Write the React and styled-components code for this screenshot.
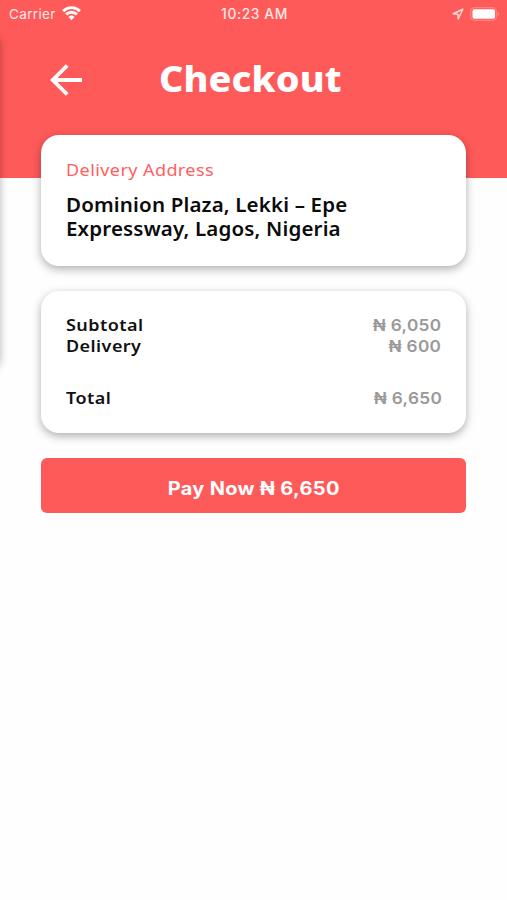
import React from "react";
import styled, { createGlobalStyle } from "styled-components";

const CORAL = "#ff5a5a";

const GlobalStyle = createGlobalStyle`
  * { box-sizing: border-box; }
  body {
    margin: 0;
    background: #fefefe;
    font-family: "Noto Sans", "Open Sans", sans-serif;
  }
`;

const Screen = styled.main`
  position: relative;
  height: 900px;
  overflow: hidden;
  background: linear-gradient(${CORAL} 0 178px, #fefefe 178px);
`;

const PreviousScreenShadow = styled.div`
  position: absolute;
  left: -21px;
  top: 32px;
  width: 20px;
  height: 334px;
  border-radius: 12px;
  box-shadow: 0 3px 10px rgba(0, 0, 0, 0.36);
`;

const StatusBar = styled.header`
  display: grid;
  grid-template-columns: 1fr auto 1fr;
  align-items: center;
  height: 27px;
  padding: 0 7px 0 9px;
  color: #ffe9e7;
  font-family: Inter, sans-serif;
  font-size: 13.5px;
`;

const StatusGroup = styled.div`
  display: flex;
  align-items: center;
  justify-content: ${({ $end }) => ($end ? "flex-end" : "flex-start")};
  gap: 6px;
  letter-spacing: 0.35px;
`;

const Clock = styled.time`
  font-size: 13.8px;
  font-weight: 500;
  letter-spacing: 0.6px;
`;

const TitleBar = styled.div`
  display: grid;
  grid-template-columns: 110px 1fr;
  align-items: center;
  height: 108px;
  padding-left: 49px;
`;

const BackButton = styled.button`
  display: flex;
  width: 34px;
  margin-top: -2px;
  padding: 0;
  border: 0;
  background: none;
`;

const Title = styled.h1`
  margin: -5px 0 0;
  color: #fff;
  font-size: 35px;
  line-height: 48px;
  font-weight: 800;
  letter-spacing: 0.1px;
  white-space: nowrap;
  transform: scaleX(1.08);
  transform-origin: left;
`;

const Content = styled.div`
  display: flex;
  flex-direction: column;
  gap: 25px;
  padding: 0 41px;
`;

const Card = styled.section`
  height: ${({ $height }) => $height}px;
  padding: 23px 25px;
  border-radius: 18px;
  background: #fff;
  box-shadow: 0 3px 10px rgba(0, 0, 0, 0.32);
`;

const AddressLabel = styled.h2`
  margin: 0 0 12px;
  color: #ff6062;
  font-size: 16.7px;
  line-height: 23px;
  font-weight: 400;
  letter-spacing: 0.38px;
  transform: scaleX(1.08);
  transform-origin: left;
`;

const Address = styled.p`
  margin: 0;
  color: #0b0b0b;
  font-size: 19px;
  line-height: 24px;
  font-weight: 600;
  letter-spacing: 0.15px;
  white-space: nowrap;
  transform: scaleX(1.08);
  transform-origin: left;
`;

const PriceRow = styled.div`
  display: flex;
  justify-content: space-between;
  height: 21px;
  margin-top: ${({ $gap }) => $gap || 0}px;
  font-size: 16.5px;
  line-height: 21px;
  font-weight: 600;
`;

const PriceLabel = styled.span`
  color: #111;
  letter-spacing: 0.4px;
  transform: scaleX(1.09);
  transform-origin: left;
`;

const Price = styled.span`
  padding-top: 1px;
  color: #999;
  font-family: Inter, sans-serif;
  font-size: 16.4px;
  letter-spacing: 0.3px;
  margin-right: -0.6px;
  transform: scaleX(1.05);
  transform-origin: right;
`;

const PayButton = styled.button`
  height: 55px;
  padding: 4px 0 0;
  border: 0;
  border-radius: 6px;
  background: ${CORAL};
  color: #fff;
  font: 700 18.5px/24px Inter, sans-serif;
`;

const PayLabel = styled.span`
  display: inline-block;
  letter-spacing: 0.3px;
  transform: scaleX(1.08);
`;

const BackArrow = () => (
  <svg width="34" height="34" viewBox="0 0 34 34" fill="none" stroke="#fff" strokeWidth="3.9">
    <path d="M18.2 2.5 3.8 17l14.4 14.5M4 17h29" />
  </svg>
);

const Wifi = () => (
  <svg width="19" height="15" viewBox="0 0 19 15" fill="none" stroke="#fff" strokeWidth="2.9">
    <path d="M1.1 5.1a12 12 0 0 1 16.8 0M4.1 8.4a7.7 7.7 0 0 1 10.8 0" />
    <path d="M6.5 11a4.3 4.3 0 0 1 6 0l-3 3.3Z" fill="#fff" stroke="none" />
  </svg>
);

const Location = () => (
  <svg width="12" height="12" viewBox="0 0 12 12" fill="none" stroke="#ffd9d6" strokeWidth="1.5" strokeLinejoin="round">
    <path d="M10.8 1.2 1.2 5.8l4.7.5.3 4.7Z" />
  </svg>
);

const Battery = () => (
  <svg width="30" height="14" viewBox="0 0 30 14">
    <rect x="0.7" y="0.7" width="25.6" height="12.6" rx="3.8" fill="none" stroke="#ff8380" strokeWidth="1.2" />
    <rect x="2.5" y="2.3" width="22.5" height="9.4" rx="1.8" fill="#fff" />
    <path d="M27.7 5v4c1.5-.5 1.5-3.5 0-4Z" fill="#ff9490" />
  </svg>
);

export default function App() {
  return (
    <>
      <GlobalStyle />
      <Screen>
        <StatusBar>
          <StatusGroup>Carrier<Wifi /></StatusGroup>
          <Clock>10:23 AM</Clock>
          <StatusGroup $end><Location /><Battery /></StatusGroup>
        </StatusBar>
        <TitleBar>
          <BackButton aria-label="Back"><BackArrow /></BackButton>
          <Title>Checkout</Title>
        </TitleBar>
        <Content>
          <Card $height={131}>
            <AddressLabel>Delivery Address</AddressLabel>
            <Address>Dominion Plaza, Lekki – Epe</Address>
            <Address>Expressway, Lagos, Nigeria</Address>
          </Card>
          <Card $height={142}>
            <PriceRow><PriceLabel>Subtotal</PriceLabel><Price>₦ 6,050</Price></PriceRow>
            <PriceRow><PriceLabel>Delivery</PriceLabel><Price>₦ 600</Price></PriceRow>
            <PriceRow $gap={31}><PriceLabel>Total</PriceLabel><Price>₦ 6,650</Price></PriceRow>
          </Card>
          <PayButton><PayLabel>Pay Now ₦ 6,650</PayLabel></PayButton>
        </Content>
        <PreviousScreenShadow />
      </Screen>
    </>
  );
}
